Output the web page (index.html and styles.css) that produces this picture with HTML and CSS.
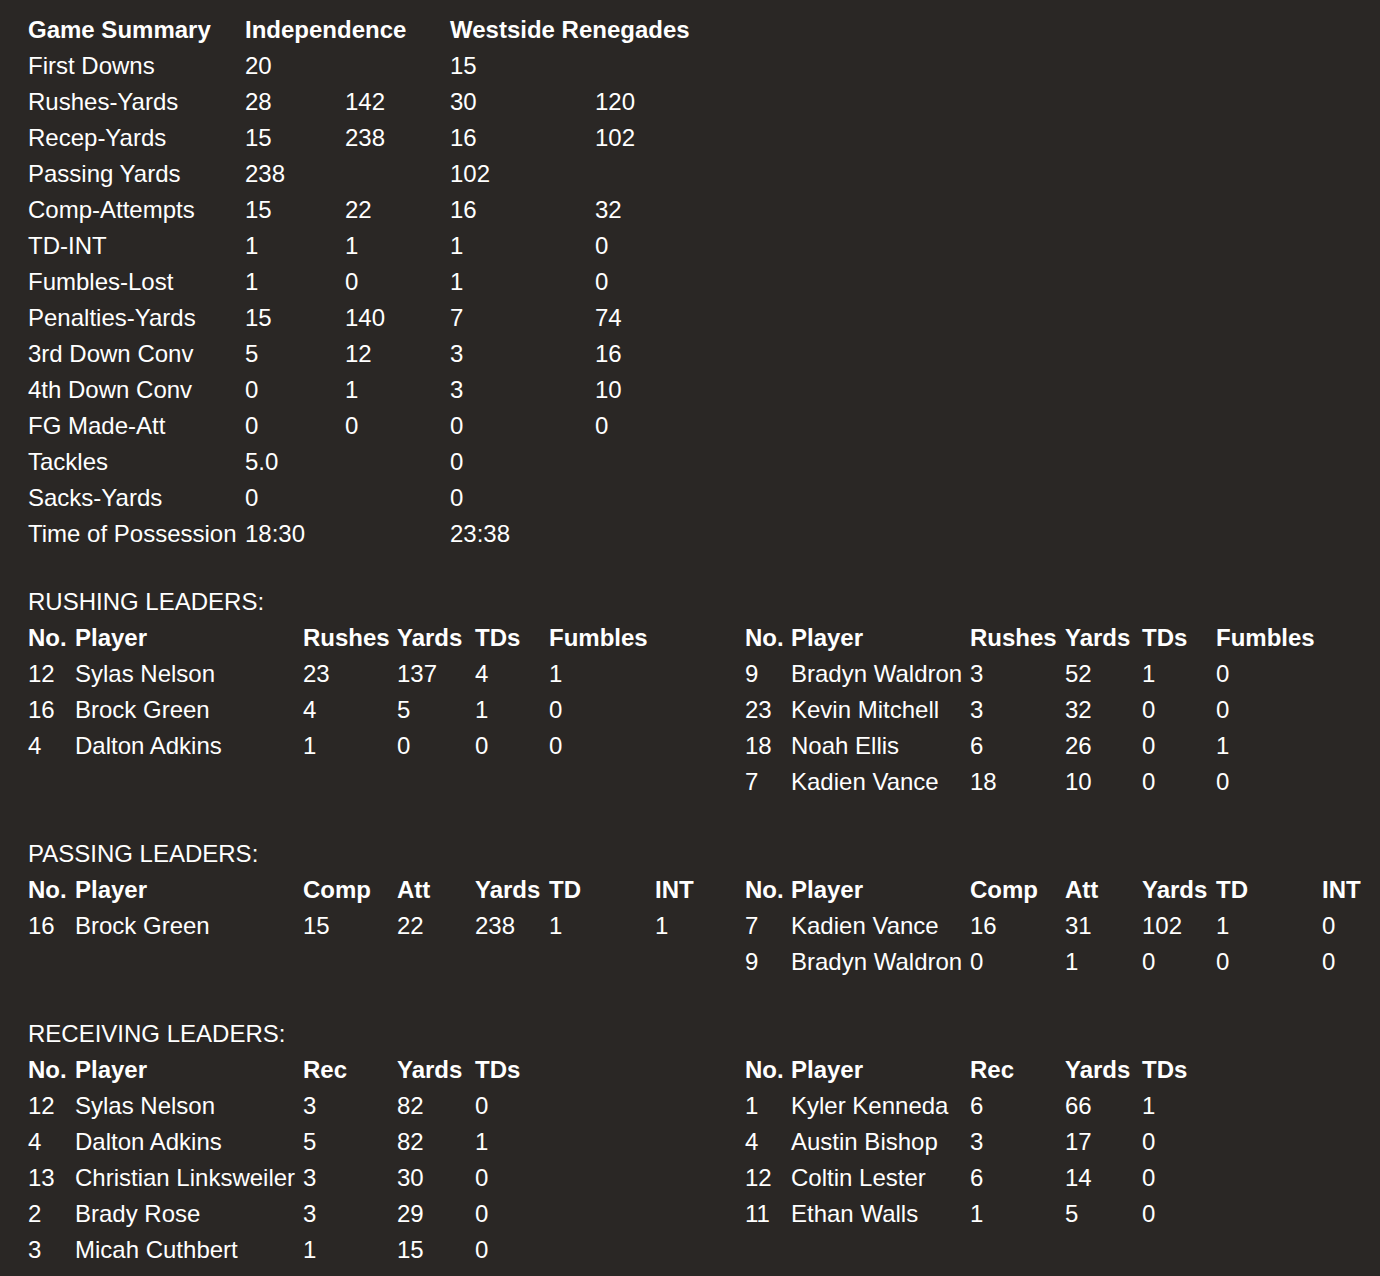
FILE: index.html
```html
<!DOCTYPE html>
<html>
<head>
<meta charset="utf-8">
<link rel="stylesheet" href="styles.css">
</head>
<body>
<div class="page">
  <div class="summary">
    <div class="b">Game Summary</div><div class="b span2">Independence</div><div class="b span2">Westside Renegades</div>
    <div>First Downs</div><div>20</div><div></div><div>15</div><div></div>
    <div>Rushes-Yards</div><div>28</div><div>142</div><div>30</div><div>120</div>
    <div>Recep-Yards</div><div>15</div><div>238</div><div>16</div><div>102</div>
    <div>Passing Yards</div><div>238</div><div></div><div>102</div><div></div>
    <div>Comp-Attempts</div><div>15</div><div>22</div><div>16</div><div>32</div>
    <div>TD-INT</div><div>1</div><div>1</div><div>1</div><div>0</div>
    <div>Fumbles-Lost</div><div>1</div><div>0</div><div>1</div><div>0</div>
    <div>Penalties-Yards</div><div>15</div><div>140</div><div>7</div><div>74</div>
    <div>3rd Down Conv</div><div>5</div><div>12</div><div>3</div><div>16</div>
    <div>4th Down Conv</div><div>0</div><div>1</div><div>3</div><div>10</div>
    <div>FG Made-Att</div><div>0</div><div>0</div><div>0</div><div>0</div>
    <div>Tackles</div><div>5.0</div><div></div><div>0</div><div></div>
    <div>Sacks-Yards</div><div>0</div><div></div><div>0</div><div></div>
    <div>Time of Possession</div><div>18:30</div><div></div><div>23:38</div><div></div>
  </div>

  <section class="leaders first">
    <div class="title">RUSHING LEADERS:</div>
    <div class="sides">
      <div class="grid left">
        <div class="b">No.</div><div class="b">Player</div><div class="b">Rushes</div><div class="b">Yards</div><div class="b">TDs</div><div class="b">Fumbles</div><div></div>
        <div>12</div><div>Sylas Nelson</div><div>23</div><div>137</div><div>4</div><div>1</div><div></div>
        <div>16</div><div>Brock Green</div><div>4</div><div>5</div><div>1</div><div>0</div><div></div>
        <div>4</div><div>Dalton Adkins</div><div>1</div><div>0</div><div>0</div><div>0</div><div></div>
      </div>
      <div class="grid right">
        <div class="b">No.</div><div class="b">Player</div><div class="b">Rushes</div><div class="b">Yards</div><div class="b">TDs</div><div class="b">Fumbles</div><div></div>
        <div>9</div><div>Bradyn Waldron</div><div>3</div><div>52</div><div>1</div><div>0</div><div></div>
        <div>23</div><div>Kevin Mitchell</div><div>3</div><div>32</div><div>0</div><div>0</div><div></div>
        <div>18</div><div>Noah Ellis</div><div>6</div><div>26</div><div>0</div><div>1</div><div></div>
        <div>7</div><div>Kadien Vance</div><div>18</div><div>10</div><div>0</div><div>0</div><div></div>
      </div>
    </div>
  </section>

  <section class="leaders">
    <div class="title">PASSING LEADERS:</div>
    <div class="sides">
      <div class="grid left">
        <div class="b">No.</div><div class="b">Player</div><div class="b">Comp</div><div class="b">Att</div><div class="b">Yards</div><div class="b">TD</div><div class="b">INT</div>
        <div>16</div><div>Brock Green</div><div>15</div><div>22</div><div>238</div><div>1</div><div>1</div>
      </div>
      <div class="grid right">
        <div class="b">No.</div><div class="b">Player</div><div class="b">Comp</div><div class="b">Att</div><div class="b">Yards</div><div class="b">TD</div><div class="b">INT</div>
        <div>7</div><div>Kadien Vance</div><div>16</div><div>31</div><div>102</div><div>1</div><div>0</div>
        <div>9</div><div>Bradyn Waldron</div><div>0</div><div>1</div><div>0</div><div>0</div><div>0</div>
      </div>
    </div>
  </section>

  <section class="leaders">
    <div class="title">RECEIVING LEADERS:</div>
    <div class="sides">
      <div class="grid left">
        <div class="b">No.</div><div class="b">Player</div><div class="b">Rec</div><div class="b">Yards</div><div class="b">TDs</div><div></div><div></div>
        <div>12</div><div>Sylas Nelson</div><div>3</div><div>82</div><div>0</div><div></div><div></div>
        <div>4</div><div>Dalton Adkins</div><div>5</div><div>82</div><div>1</div><div></div><div></div>
        <div>13</div><div>Christian Linksweiler</div><div>3</div><div>30</div><div>0</div><div></div><div></div>
        <div>2</div><div>Brady Rose</div><div>3</div><div>29</div><div>0</div><div></div><div></div>
        <div>3</div><div>Micah Cuthbert</div><div>1</div><div>15</div><div>0</div><div></div><div></div>
      </div>
      <div class="grid right">
        <div class="b">No.</div><div class="b">Player</div><div class="b">Rec</div><div class="b">Yards</div><div class="b">TDs</div><div></div><div></div>
        <div>1</div><div>Kyler Kenneda</div><div>6</div><div>66</div><div>1</div><div></div><div></div>
        <div>4</div><div>Austin Bishop</div><div>3</div><div>17</div><div>0</div><div></div><div></div>
        <div>12</div><div>Coltin Lester</div><div>6</div><div>14</div><div>0</div><div></div><div></div>
        <div>11</div><div>Ethan Walls</div><div>1</div><div>5</div><div>0</div><div></div><div></div>
      </div>
    </div>
  </section>
</div>
</body>
</html>
```

FILE: styles.css
```css
html, body {
  margin: 0;
  padding: 0;
  background: #2a2725;
}
body {
  color: #ffffff;
  font-family: "Liberation Sans", Arial, Helvetica, sans-serif;
  font-size: 24px;
  line-height: 36px;
}
.page {
  padding: 12px 0 0 28px;
}
.b {
  font-weight: bold;
}
.summary {
  display: grid;
  grid-template-columns: 217px 100px 105px 145px 1fr;
  white-space: nowrap;
}
.span2 {
  grid-column: span 2;
}
.leaders {
  margin-top: 36px;
}
.leaders.first {
  margin-top: 32px;
}
.sides {
  display: flex;
  align-items: flex-start;
}
.grid {
  display: grid;
  white-space: nowrap;
}
.grid.left {
  width: 717px;
  grid-template-columns: 47px 228px 94px 78px 74px 106px 90px;
}
.grid.right {
  grid-template-columns: 46px 179px 95px 77px 74px 106px 50px;
}
```
